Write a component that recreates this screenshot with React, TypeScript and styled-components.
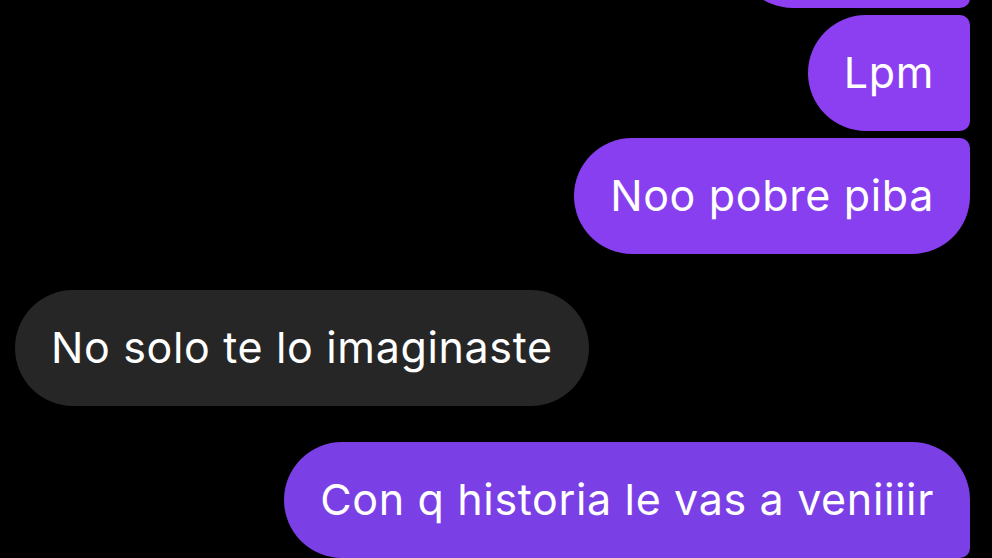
import React from "react";
import styled, { createGlobalStyle } from "styled-components";

const Global = createGlobalStyle`
  html, body {
    margin: 0;
    padding: 0;
    background: #000;
  }
  body {
    font-family: Inter, "Liberation Sans", Arial, sans-serif;
    -webkit-font-smoothing: antialiased;
  }
`;

const Thread = styled.main`
  display: flex;
  flex-direction: column;
  gap: 36px;
  height: 558px;
  overflow: hidden;
  box-sizing: border-box;
  padding: 0 22px 0 15px;
  background: #000;
`;

const Group = styled.section<{ $mine?: boolean; $first?: boolean }>`
  display: flex;
  flex-direction: column;
  align-items: ${(p) => (p.$mine ? "flex-end" : "flex-start")};
  gap: 7px;
  margin-top: ${(p) => (p.$first ? "-108px" : "0")};
`;

const Bubble = styled.div<{
  $mine?: boolean;
  $tone?: string;
  $tr?: number;
  $br?: number;
  $w?: number;
}>`
  flex: none;
  height: 116px;
  box-sizing: border-box;
  display: flex;
  align-items: center;
  padding: 0 36px 2px;
  ${(p) => (p.$w ? `width: ${p.$w}px;` : "")}
  border-radius: ${(p) =>
    p.$mine ? `58px ${p.$tr ?? 58}px ${p.$br ?? 58}px 58px` : "58px"};
  background: ${(p) => (p.$mine ? p.$tone ?? "#8a3ff0" : "#262626")};
  color: #fff;
  font-size: 43px;
  font-weight: 400;
  letter-spacing: 0.65px;
  white-space: nowrap;
  line-height: 1;
`;

export default function App() {
  return (
    <>
      <Global />
      <Thread>
        <Group $mine $first>
          <Bubble $mine $tone="#8d3ff1" $tr={58} $br={10} $w={235} />
          <Bubble $mine $tone="#8c3ff0" $tr={10} $br={10}>
            Lpm
          </Bubble>
          <Bubble $mine $tone="#883ff0" $tr={10} $br={58}>
            Noo pobre piba
          </Bubble>
        </Group>
        <Group>
          <Bubble>No solo te lo imaginaste</Bubble>
        </Group>
        <Group $mine>
          <Bubble $mine $tone="#7b3fe6" $tr={58} $br={10}>
            Con q historia le vas a veniiiir
          </Bubble>
        </Group>
      </Thread>
    </>
  );
}
